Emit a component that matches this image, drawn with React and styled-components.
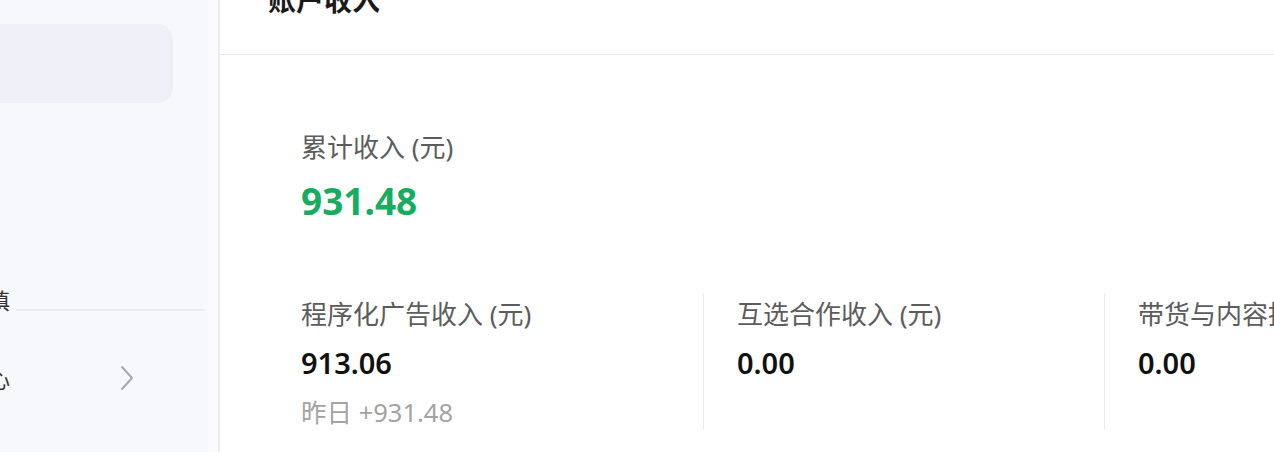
import React from "react";
import styled, { createGlobalStyle } from "styled-components";

const GlobalStyle = createGlobalStyle`
  html, body {
    margin: 0;
    padding: 0;
    background: #ffffff;
    overflow: hidden;
  }
  body {
    font-family: "Noto Sans", "Noto Sans CJK SC", sans-serif;
    color: #1a1a1a;
  }
`;

const Page = styled.div`
  display: flex;
  width: 1274px;
  height: 452px;
  overflow: hidden;
`;

// 左侧菜单外框
const SideWrap = styled.aside`
  flex: 0 0 220px;
  box-sizing: border-box;
  background: #fbfbfd;
  border-right: 2px solid #ececef;
`;

const SideNav = styled.nav`
  width: 208px;
  height: 100%;
  background: #f7f8fc;
  display: flex;
  flex-direction: column;
  overflow: hidden;
`;

const ActiveItem = styled.div`
  margin: 24px 0 0 -40px;
  width: 213px;
  height: 79px;
  border-radius: 15px;
  background: #eff0f7;
  flex-shrink: 0;
`;

const GroupRow = styled.div`
  margin-top: 185px;
  display: flex;
  align-items: flex-end;
  height: 23px;
`;

const GroupText = styled.span`
  margin-left: -12px;
  font-size: 22px;
  line-height: 22px;
  color: #333;
`;

const Rule = styled.span`
  flex: 1;
  height: 2px;
  margin: 0 3px 0 6px;
  background: #ebecf1;
`;

const MenuRow = styled.div`
  margin-top: 42px;
  height: 50px;
  display: flex;
  align-items: center;
  justify-content: space-between;
  padding-right: 74px;
`;

const MenuText = styled.span`
  margin-left: -12px;
  font-size: 22px;
  color: #333;
`;

const Chevron = () => (
  <svg width="14" height="26" viewBox="0 0 14 26" fill="none">
    <path d="M2 2 L12 13 L2 24" stroke="#a8a8ac" strokeWidth="2" strokeLinecap="round" strokeLinejoin="round" />
  </svg>
);

// 右侧主体
const Main = styled.main`
  flex: 1;
  display: flex;
  flex-direction: column;
  min-width: 0;
`;

const Header = styled.header`
  height: 54px;
  flex-shrink: 0;
  border-bottom: 1px solid #ebebeb;
  padding-left: 48px;
  overflow: hidden;
`;

const Title = styled.h1`
  margin: -14px 0 0 0;
  font-size: 28px;
  line-height: 28px;
  font-weight: 700;
  color: #1a1a1a;
`;

const Content = styled.section`
  padding: 74px 0 0 81px;
`;

const TotalLabel = styled.div`
  font-size: 26px;
  line-height: 36px;
  color: #5c5c5c;
`;

const TotalValue = styled.div`
  margin-top: 12px;
  font-size: 37px;
  line-height: 48px;
  font-weight: 700;
  color: #17ad60;
`;

const Stats = styled.div`
  margin-top: 68px;
  display: flex;
`;

const StatCol = styled.div`
  flex: 0 0 ${p => (p.first ? "402px" : "401px")};
  box-sizing: border-box;
  height: 137px;
  padding: 3px 0 0 ${p => (p.first ? "0" : "33px")};
  border-left: ${p => (p.first ? "none" : "1px solid #ebebeb")};
  white-space: nowrap;
`;

const StatLabel = styled.div`
  font-size: 26px;
  line-height: 36px;
  color: #5c5c5c;
`;

const StatValue = styled.div`
  margin-top: 11px;
  font-size: 29px;
  line-height: 40px;
  font-weight: 600;
  color: #111;
`;

const StatSub = styled.div`
  margin-top: 11px;
  font-size: 25.5px;
  line-height: 36px;
  color: #a3a3a3;
`;

const stats = [
  { label: "程序化广告收入 (元)", value: "913.06", sub: "昨日 +931.48" },
  { label: "互选合作收入 (元)", value: "0.00" },
  { label: "带货与内容推广收入 (元)", value: "0.00" },
];

export default function App() {
  return (
    <Page>
      <GlobalStyle />
      <SideWrap>
        <SideNav>
          <ActiveItem />
          <GroupRow>
            <GroupText>填</GroupText>
            <Rule />
          </GroupRow>
          <MenuRow>
            <MenuText>心</MenuText>
            <Chevron />
          </MenuRow>
        </SideNav>
      </SideWrap>
      <Main>
        <Header>
          <Title>账户收入</Title>
        </Header>
        <Content>
          <TotalLabel>累计收入 (元)</TotalLabel>
          <TotalValue>931.48</TotalValue>
          <Stats>
            {stats.map((s, i) => (
              <StatCol key={s.label} first={i === 0}>
                <StatLabel>{s.label}</StatLabel>
                <StatValue>{s.value}</StatValue>
                {s.sub && <StatSub>{s.sub}</StatSub>}
              </StatCol>
            ))}
          </Stats>
        </Content>
      </Main>
    </Page>
  );
}
